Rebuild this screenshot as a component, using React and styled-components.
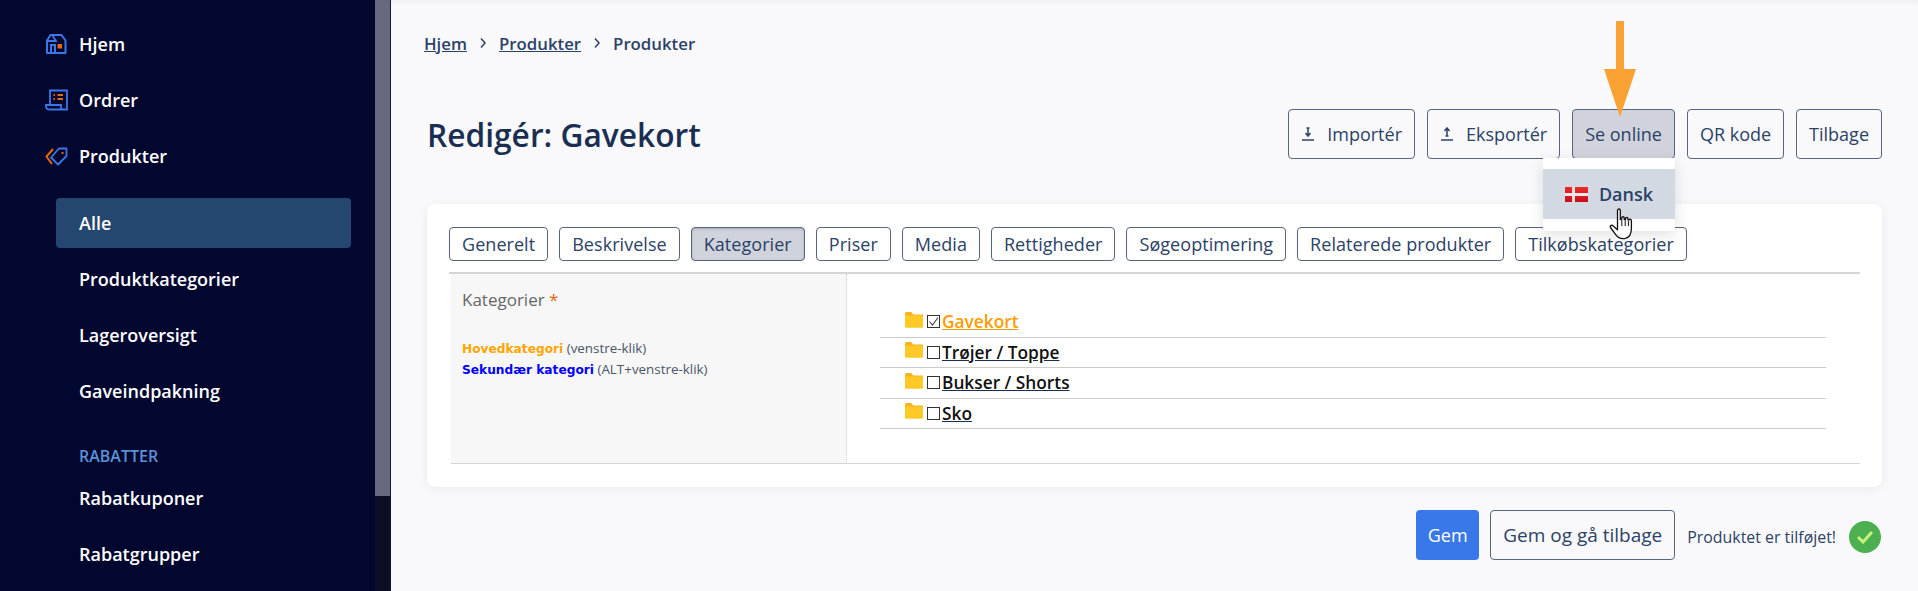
import styled, { createGlobalStyle } from "styled-components";

const font = `"Open Sans", "Noto Sans", sans-serif`;

const GlobalStyle = createGlobalStyle`
  html, body {
    margin: 0;
    padding: 0;
    height: 591px;
    overflow: hidden;
    background: #f9f9fc;
    font-family: ${font};
  }
  * { box-sizing: border-box; }
`;

const HomeIcon = () => (
  <svg width="22" height="22" viewBox="0 0 22 22" fill="none">
    <path d="M2 20V7.5L5.5 2h11L20.500 7.500V20z" stroke="#3b78e7" strokeWidth="2" strokeLinejoin="round" />
    <path d="M2 8h9L7.500 2.500M11 8l-3.500-5.500" stroke="#3b78e7" strokeWidth="1.800" />
    <path d="M6 20v-8h4v8" stroke="#3b78e7" strokeWidth="2" />
    <rect x="12.500" y="11" width="4.500" height="4.500" fill="#e8690b" />
  </svg>
);

const OrderIcon = () => (
  <svg width="23" height="22" viewBox="0 0 23 22" fill="none">
    <path d="M5 16V1.500h17V20.500H4.500C2.500 20.500 1 19.500 1 17.500V16h15v2.500c0 1 .8 2 2 2" stroke="#3b78e7" strokeWidth="1.800" />
    <path d="M8.500 6h1.500M12.500 6h5.500M8.500 10h1.500M12.500 10h5.500" stroke="#e8690b" strokeWidth="1.800" />
  </svg>
);

const TagIcon = () => (
  <svg width="23" height="19" viewBox="0 0 23 19" fill="none">
    <path d="M8 2L1.500 9.500 7 17" stroke="#e8690b" strokeWidth="2" />
    <path d="M14 1.500h7.500V9L13 17.500 6 10.500z" stroke="#3b78e7" strokeWidth="1.800" strokeLinejoin="round" />
    <rect x="16.500" y="5" width="2" height="2" fill="#e8690b" />
  </svg>
);

const Chevron = () => (
  <ChevronIcon width="8" height="12" viewBox="0 0 8 12" fill="none">
    <path d="M2 1.500L6 6l-4 4.500" stroke="#2b4266" strokeWidth="1.500" />
  </ChevronIcon>
);

const ImportIcon = () => (
  <svg width="14" height="14" viewBox="0 0 14 14" fill="none">
    <path d="M7 1v7M4.500 6L7 9l2.500-3M5.500 1h3" stroke="#2b4266" strokeWidth="1.500" />
    <path d="M1 13h12" stroke="#2b4266" strokeWidth="1.500" />
  </svg>
);

const ExportIcon = () => (
  <svg width="14" height="14" viewBox="0 0 14 14" fill="none">
    <path d="M7 9V2M4.500 4L7 1l2.500 3M5.500 9h3" stroke="#2b4266" strokeWidth="1.500" />
    <path d="M1 13h12" stroke="#2b4266" strokeWidth="1.500" />
  </svg>
);

const FolderIcon = () => (
  <FolderSvg width="18" height="16" viewBox="0 0 18 16">
    <path d="M0 2C0 .8.700 0 1.800 0h4.400l2 2.500H18V5H0z" fill="#ffb01f" />
    <path d="M0 3.500h16.800c.7 0 1.200.5 1.200 1.200V14.500c0 .8-.5 1.300-1.200 1.300H1.200C.5 15.800 0 15.300 0 14.500z" fill="#ffca28" />
  </FolderSvg>
);

const Flag = () => (
  <svg width="23" height="15" viewBox="0 0 23 15">
    <defs>
      <linearGradient id="flagGloss" x1="0" y1="0" x2="0" y2="1">
        <stop offset="0" stopColor="#ee2a2f" />
        <stop offset="1" stopColor="#c40f18" />
      </linearGradient>
    </defs>
    <rect width="23" height="15" fill="url(#flagGloss)" />
    <rect x="7" width="3" height="15" fill="#f6dede" />
    <rect y="6" width="23" height="3" fill="#f6e8e8" />
  </svg>
);

const tabs = ["Generelt", "Beskrivelse", "Kategorier", "Priser", "Media", "Rettigheder", "Søgeoptimering", "Relaterede produkter", "Tilkøbskategorier"];
const categories = [
  { name: "Gavekort", main: true },
  { name: "Trøjer / Toppe" },
  { name: "Bukser / Shorts" },
  { name: "Sko" },
];

export default function App() {
  return (
    <Page>
      <GlobalStyle />
      <Sidebar>
        <Nav>
          <NavItem><IconSlot><HomeIcon /></IconSlot>Hjem</NavItem>
          <NavItem><IconSlot><OrderIcon /></IconSlot>Ordrer</NavItem>
          <NavItem><IconSlot><TagIcon /></IconSlot>Produkter</NavItem>
          <SubMenu>
            <SubItem $active>Alle</SubItem>
            <SubItem>Produktkategorier</SubItem>
            <SubItem>Lageroversigt</SubItem>
            <SubItem>Gaveindpakning</SubItem>
            <SubHeading>RABATTER</SubHeading>
            <SubItem>Rabatkuponer</SubItem>
            <SubItem>Rabatgrupper</SubItem>
          </SubMenu>
        </Nav>
        <ScrollTrack><ScrollThumb /></ScrollTrack>
      </Sidebar>
      <Main>
        <Breadcrumbs>
          <Crumb href="#">Hjem</Crumb>
          <Chevron />
          <Crumb href="#">Produkter</Crumb>
          <Chevron />
          <CurrentCrumb>Produkter</CurrentCrumb>
        </Breadcrumbs>
        <Header>
          <Title>Redigér: Gavekort</Title>
          <Actions>
            <ActionButton><ImportIcon />Importér</ActionButton>
            <ActionButton><ExportIcon />Eksportér</ActionButton>
            <DropdownWrap>
              <Arrow width="32" height="96" viewBox="0 0 32 96">
                <path d="M12 0h8v48h12L16 96 0 48h12z" fill="#f9a233" />
              </Arrow>
              <ActionButton $open>Se online</ActionButton>
              <Dropdown>
                <DropdownItem><Flag />Dansk</DropdownItem>
              </Dropdown>
              <HandCursor width="26" height="32" viewBox="0 0 26 32">
                <path d="M8.500 2.500c0-2 2.800-2 2.800 0v9l1.500-.4V9.800c0-1.400 2.400-1.400 2.400 0v1.600l1.400-.1v-.9c0-1.300 2.300-1.300 2.300 0v1.300l1.200.1c.9-1 2.300-.5 2.300.8v8c0 4.500-2 8.800-6 9.800-4 .8-7.500-.8-9.500-3.500L1.500 19.500c-1-1.400 1-3 2.500-1.700l4.500 4z" fill="#fff" stroke="#111" strokeWidth="1.300" strokeLinejoin="round" />
                <path d="M12.800 12v6M16.200 12v6M19.400 12.500v5.500" stroke="#111" strokeWidth="1" />
              </HandCursor>
            </DropdownWrap>
            <ActionButton>QR kode</ActionButton>
            <ActionButton>Tilbage</ActionButton>
          </Actions>
        </Header>
        <Card>
          <Tabs>
            {tabs.map((tab) => (
              <Tab key={tab} $active={tab === "Kategorier"}>{tab}</Tab>
            ))}
          </Tabs>
          <FormRow>
            <LabelCell>
              <FieldLabel>Kategorier <Required>*</Required></FieldLabel>
              <Legend>
                <LegendRow><LegendName $color="#ffa500">Hovedkategori</LegendName> (venstre-klik)</LegendRow>
                <LegendRow><LegendName $color="#0000ff">Sekundær kategori</LegendName> (ALT+venstre-klik)</LegendRow>
              </Legend>
            </LabelCell>
            <TreeCell>
              <Tree>
                {categories.map((cat) => (
                  <TreeRow key={cat.name}>
                    <FolderIcon />
                    <CheckBox>
                      {cat.main && (
                        <svg width="11" height="11" viewBox="0 0 11 11" fill="none">
                          <path d="M1.500 5.500L4.500 9 10 1.500" stroke="#444" strokeWidth="1.100" />
                        </svg>
                      )}
                    </CheckBox>
                    <TreeLink href="#" $main={cat.main}>{cat.name}</TreeLink>
                  </TreeRow>
                ))}
              </Tree>
            </TreeCell>
          </FormRow>
        </Card>
        <Footer>
          <SaveButton>Gem</SaveButton>
          <BackButton>Gem og gå tilbage</BackButton>
          <Status>Produktet er tilføjet!</Status>
          <Success>
            <svg width="18" height="14" viewBox="0 0 18 14" fill="none">
              <path d="M2 7l5 5 9-10" stroke="#c8f07c" strokeWidth="3" />
            </svg>
          </Success>
        </Footer>
      </Main>
    </Page>
  );
}

const Page = styled.div`
  display: flex;
  width: 1918px;
  height: 591px;
  overflow: hidden;
`;
const Sidebar = styled.aside`
  display: flex;
  flex: 0 0 391px;
  height: 591px;
  border-right: 1px solid #15182e;
  background: #02072f;
`;
const Nav = styled.nav`
  flex: 1;
  padding-top: 16px;
`;
const NavItem = styled.div`
  display: flex;
  align-items: center;
  height: 56px;
  padding-left: 45px;
  color: #fff;
  font-size: 18px;
  font-weight: 600;
`;
const IconSlot = styled.span`
  display: flex;
  width: 34px;
`;
const SubMenu = styled.div`
  margin-top: 14px;
  padding: 0 24px 0 56px;
`;
const SubItem = styled.div`
  display: flex;
  align-items: center;
  height: 50px;
  margin-bottom: 6px;
  padding-left: 23px;
  border-radius: 4px;
  background: ${(p) => (p.$active ? "#25466f" : "transparent")};
  color: #fff;
  font-size: 18px;
  font-weight: 600;
`;
const SubHeading = styled.div`
  margin-top: 27px;
  margin-bottom: 4px;
  padding-left: 23px;
  color: #5a93d8;
  font-size: 16px;
  font-weight: 600;
  line-height: 26px;
`;
const ScrollTrack = styled.div`
  flex: 0 0 15px;
  background: #0c0e24;
`;
const ScrollThumb = styled.div`
  height: 496px;
  background: #666a7e;
`;
const Main = styled.main`
  flex: 1;
  padding: 32px 36px 0;
  box-shadow: inset 0 7px 7px -7px rgba(0, 0, 0, 0.08);
`;
const Breadcrumbs = styled.div`
  display: flex;
  align-items: center;
  height: 22px;
  margin-left: -3px;
  color: #2b4266;
  font-size: 16.800px;
  font-weight: 600;
`;
const Crumb = styled.a`
  color: #2b4266;
  text-decoration: underline;
`;
const CurrentCrumb = styled.span``;
const ChevronIcon = styled.svg`
  margin: 0 12px;
`;
const Header = styled.div`
  display: flex;
  align-items: center;
  justify-content: space-between;
  height: 50px;
  margin-top: 55px;
`;
const Title = styled.h1`
  margin: 0;
  color: #1a2e52;
  font-size: 31.700px;
  font-weight: 600;
`;
const Actions = styled.div`
  display: flex;
  gap: 12px;
`;
const ActionButton = styled.button`
  display: flex;
  align-items: center;
  gap: 12px;
  height: 50px;
  padding: 0 12px;
  border: 1px solid #56667f;
  border-radius: 4px;
  background: ${(p) => (p.$open ? "#d0d3dc" : "transparent")};
  color: #2b4266;
  font-family: ${font};
  font-size: 18px;
  white-space: nowrap;
`;
const BackButton = styled(ActionButton)`
  font-size: 19px;
`;
const DropdownWrap = styled.div`
  position: relative;
`;
const Arrow = styled.svg`
  position: absolute;
  top: -88px;
  left: 32px;
`;
const Dropdown = styled.div`
  position: absolute;
  top: 49px;
  right: 0;
  z-index: 2;
  width: 132px;
  padding: 11px 0 12px;
  background: #fff;
  box-shadow: 0 4px 14px rgba(0, 0, 0, 0.12);
`;
const DropdownItem = styled.div`
  display: flex;
  align-items: center;
  gap: 11px;
  height: 50px;
  padding-left: 22px;
  background: #d3d9e3;
  color: #2b4266;
  font-size: 18px;
  font-weight: 600;
`;
const HandCursor = styled.svg`
  position: absolute;
  top: 99px;
  left: 37px;
  z-index: 3;
`;
const Card = styled.section`
  height: 283px;
  margin-top: 45px;
  padding: 23px 22px 0;
  border-radius: 8px;
  background: #fff;
  box-shadow: 0 2px 10px rgba(30, 40, 80, 0.07);
`;
const Tabs = styled.div`
  display: flex;
  gap: 11px;
  margin-bottom: 11px;
`;
const Tab = styled.button`
  height: 34px;
  padding: 0 12px;
  border: 1px solid #56667f;
  border-radius: 4px;
  background: ${(p) => (p.$active ? "#d0d3dc" : "#fff")};
  box-shadow: ${(p) => (p.$active ? "inset 0 1px 3px rgba(0,0,0,0.2)" : "none")};
  color: #2b4266;
  font-family: ${font};
  font-size: 18px;
  letter-spacing: 0.05px;
  white-space: nowrap;
`;
const FormRow = styled.div`
  display: flex;
  height: 192px;
  border-top: 2px solid #d5d5d5;
`;
const LabelCell = styled.div`
  flex: 0 0 396px;
  margin-left: 2px;
  padding: 14px 11px;
  border-right: 1px dotted #ccc;
  border-bottom: 1px solid #d5d5d5;
  background: #f7f7f7;
`;
const FieldLabel = styled.div`
  color: #666;
  font-size: 17px;
`;
const Required = styled.span`
  color: #e8690b;
`;
const Legend = styled.div`
  margin-top: 27px;
  color: #4a5568;
  font-size: 13.400px;
  line-height: 20px;
`;
const LegendRow = styled.div`
  white-space: nowrap;
`;
const LegendName = styled.b`
  color: ${(p) => p.$color};
  font-family: "DejaVu Sans", sans-serif;
  font-size: 12.200px;
`;
const TreeCell = styled.div`
  flex: 1;
  padding: 33px 0 0 33px;
  border-bottom: 1px solid #d5d5d5;
`;
const Tree = styled.div`
  width: 946px;
`;
const TreeRow = styled.div`
  display: flex;
  align-items: center;
  height: 30.500px;
  padding-left: 25px;
  border-bottom: 1px solid #ccc;
`;
const FolderSvg = styled.svg`
  margin-right: 4px;
  margin-top: -4px;
`;
const CheckBox = styled.span`
  display: flex;
  align-items: center;
  justify-content: center;
  width: 13px;
  height: 13px;
  margin-right: 2px;
  border: 1px solid #333;
`;
const TreeLink = styled.a`
  color: ${(p) => (p.$main ? "#ff9c00" : "#111")};
  font-size: 17.300px;
  font-weight: 600;
  text-decoration: underline;
  text-decoration-color: ${(p) => (p.$main ? "#ff9c00" : "#1a2e52")};
`;
const Footer = styled.div`
  display: flex;
  align-items: center;
  justify-content: flex-end;
  gap: 11px;
  height: 50px;
  margin-top: 23px;
  padding-right: 1px;
`;
const SaveButton = styled.button`
  width: 63px;
  height: 50px;
  border: 0;
  border-radius: 4px;
  background: #3878e8;
  color: #fff;
  font-family: ${font};
  font-size: 18px;
`;
const Status = styled.span`
  margin: 0 2px 0 1px;
  padding-top: 4px;
  color: #2b4266;
  font-size: 15.900px;
`;
const Success = styled.span`
  display: flex;
  align-items: center;
  justify-content: center;
  width: 32px;
  height: 32px;
  margin-top: 4px;
  border-radius: 50%;
  background: #4caf50;
`;
